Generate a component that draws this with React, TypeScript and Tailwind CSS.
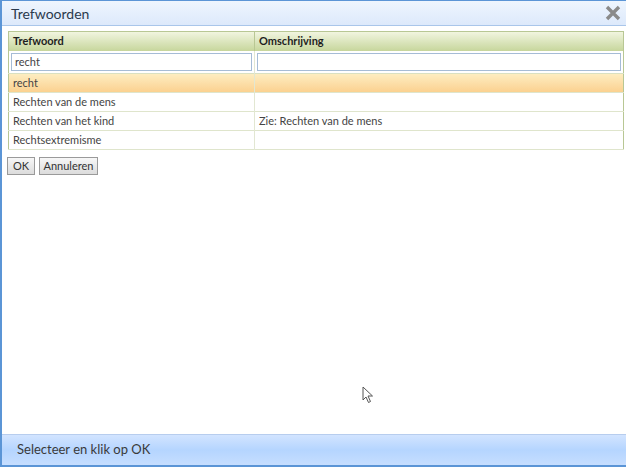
import React, { useState } from 'react';

const rows = [
  { word: 'recht', desc: '', selected: true },
  { word: 'Rechten van de mens', desc: '' },
  { word: 'Rechten van het kind', desc: 'Zie: Rechten van de mens' },
  { word: 'Rechtsextremisme', desc: '' },
];

export default function App() {
  const [search, setSearch] = useState('recht');
  const [desc, setDesc] = useState('');

  return (
    <div
      className="relative flex h-[467px] w-[626px] flex-col overflow-hidden border-l-2 border-[#5b95d6] bg-white text-[#333]"
      style={{ fontFamily: 'Lato, "Noto Sans", sans-serif' }}
    >
      {/* Title bar */}
      <div className="flex h-[26px] shrink-0 items-center justify-between border-t border-b border-t-[#5b95d6] border-b-[#a9c6ea] bg-gradient-to-b from-[#eef5fe] to-[#dde9fb] pl-[9px] pr-[4px]">
        <span className="text-[14px] text-[#2b3a4d]">Trefwoorden</span>
        <svg width="18" height="18" viewBox="0 0 18 18" className="mb-[1px]">
          <path d="M3 3 L15 15 M15 3 L3 15" stroke="#8a8a8a" strokeWidth="3.4" strokeLinecap="butt" />
        </svg>
      </div>

      {/* Content */}
      <div className="flex-1 px-[6px] pt-[5px]">
        <table className="w-[614px] border-collapse border border-[#b8c794] text-[11px]">
          <thead>
            <tr className="h-[19px] bg-gradient-to-b from-[#f1f5df] to-[#c7d69c]">
              <th className="w-[245px] border-r border-[#b8c794] pl-[4px] text-left font-bold text-[#1e1e1e]">Trefwoord</th>
              <th className="pl-[4px] text-left font-bold text-[#1e1e1e]">Omschrijving</th>
            </tr>
          </thead>
          <tbody>
            <tr className="h-[23px] border-b border-[#d9e0c2]">
              <td className="border-r border-[#e2e7d2] px-[2px]">
                <input
                  value={search}
                  onChange={e => setSearch(e.target.value)}
                  className="block h-[18px] w-[241px] border border-[#a6bcd6] bg-white px-[3px] text-[11px] text-[#444] outline-none"
                />
              </td>
              <td className="px-[2px]">
                <input
                  value={desc}
                  onChange={e => setDesc(e.target.value)}
                  className="block h-[18px] w-[364px] border border-[#a6bcd6] bg-white px-[3px] text-[11px] outline-none"
                />
              </td>
            </tr>
            {rows.map(r => (
              <tr
                key={r.word}
                className={`h-[19px] border-b border-[#dfe5cc] ${
                  r.selected ? 'bg-gradient-to-b from-[#fdedc1] to-[#fbd190]' : 'bg-white'
                }`}
              >
                <td className="border-r border-[#e2e7d2] pl-[4px] text-[#444]">{r.word}</td>
                <td className="pl-[4px] text-[#444]">{r.desc}</td>
              </tr>
            ))}
          </tbody>
        </table>

        <div className="ml-[-1px] mt-[7px] flex gap-[4px]">
          <button className="h-[18px] w-[28px] border border-[#9a9a9a] bg-gradient-to-b from-[#f7f7f7] to-[#dcdcdc] text-[11px] text-[#333]">
            OK
          </button>
          <button className="h-[18px] w-[59px] border border-[#9a9a9a] bg-gradient-to-b from-[#f7f7f7] to-[#dcdcdc] text-[11px] text-[#333]">
            Annuleren
          </button>
        </div>
      </div>

      {/* Mouse pointer */}
      <svg width="12" height="18" viewBox="0 0 12 18" className="absolute left-[360px] top-[386px]">
        <path d="M1 1 L1 14 L4 11 L6.5 16.5 L8.5 15.5 L6 10 L10.5 10 Z" fill="#fff" stroke="#555" strokeWidth="1" />
      </svg>

      {/* Footer */}
      <div className="flex h-[33px] shrink-0 items-center border-t border-b-2 border-t-[#b7cdee] border-b-[#5b95d6] bg-gradient-to-b from-[#d2e4ff] via-[#b5d5ff] to-[#c6deff] pl-[15px]">
        <span className="text-[13px] text-[#3a3a3a]">Selecteer en klik op OK</span>
      </div>
    </div>
  );
}
